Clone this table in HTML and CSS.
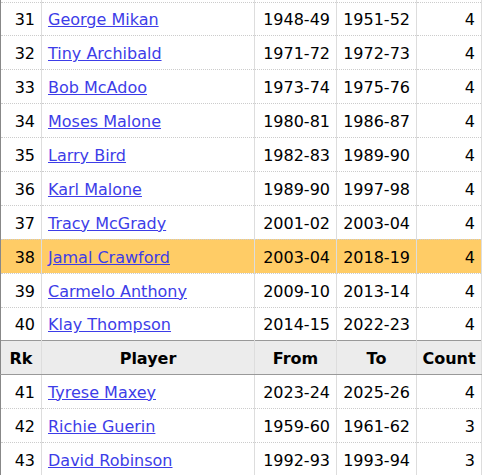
FILE: index.html
```html
<!DOCTYPE html>
<html>
<head>
<meta charset="utf-8">
<link rel="stylesheet" href="styles.css">
</head>
<body>
<table class="stats">
  <colgroup>
    <col class="c-rk"><col class="c-player"><col class="c-from"><col class="c-to"><col class="c-count">
  </colgroup>
  <tbody>
    <tr class="cut"><td></td><td></td><td></td><td></td><td></td></tr>
    <tr><td class="num">31</td><td class="name"><a href="#">George Mikan</a></td><td class="num">1948-49</td><td class="num">1951-52</td><td class="num">4</td></tr>
    <tr><td class="num">32</td><td class="name"><a href="#">Tiny Archibald</a></td><td class="num">1971-72</td><td class="num">1972-73</td><td class="num">4</td></tr>
    <tr><td class="num">33</td><td class="name"><a href="#">Bob McAdoo</a></td><td class="num">1973-74</td><td class="num">1975-76</td><td class="num">4</td></tr>
    <tr><td class="num">34</td><td class="name"><a href="#">Moses Malone</a></td><td class="num">1980-81</td><td class="num">1986-87</td><td class="num">4</td></tr>
    <tr><td class="num">35</td><td class="name"><a href="#">Larry Bird</a></td><td class="num">1982-83</td><td class="num">1989-90</td><td class="num">4</td></tr>
    <tr><td class="num">36</td><td class="name"><a href="#">Karl Malone</a></td><td class="num">1989-90</td><td class="num">1997-98</td><td class="num">4</td></tr>
    <tr><td class="num">37</td><td class="name"><a href="#">Tracy McGrady</a></td><td class="num">2001-02</td><td class="num">2003-04</td><td class="num">4</td></tr>
    <tr class="hl"><td class="num">38</td><td class="name"><a href="#">Jamal Crawford</a></td><td class="num">2003-04</td><td class="num">2018-19</td><td class="num">4</td></tr>
    <tr><td class="num">39</td><td class="name"><a href="#">Carmelo Anthony</a></td><td class="num">2009-10</td><td class="num">2013-14</td><td class="num">4</td></tr>
    <tr><td class="num">40</td><td class="name"><a href="#">Klay Thompson</a></td><td class="num">2014-15</td><td class="num">2022-23</td><td class="num">4</td></tr>
    <tr class="head"><th>Rk</th><th>Player</th><th>From</th><th>To</th><th>Count</th></tr>
    <tr class="after"><td class="num">41</td><td class="name"><a href="#">Tyrese Maxey</a></td><td class="num">2023-24</td><td class="num">2025-26</td><td class="num">4</td></tr>
    <tr><td class="num">42</td><td class="name"><a href="#">Richie Guerin</a></td><td class="num">1959-60</td><td class="num">1961-62</td><td class="num">3</td></tr>
    <tr><td class="num">43</td><td class="name"><a href="#">David Robinson</a></td><td class="num">1992-93</td><td class="num">1993-94</td><td class="num">3</td></tr>
  </tbody>
</table>
</body>
</html>
```
FILE: styles.css
```css
html, body {
  margin: 0;
  padding: 0;
  background: #fff;
}
body {
  font-family: "DejaVu Sans", Verdana, sans-serif;
  font-size: 16px;
  color: #000;
}
.stats {
  border-collapse: collapse;
  table-layout: fixed;
  width: 482px;
  border-left: 1px solid #888;
}
.c-rk { width: 41px; }
.c-player { width: 213px; }
.c-from { width: 82px; }
.c-to { width: 80px; }
.c-count { width: 65px; }
.stats td, .stats th {
  border-left: 1px solid #ddd;
  border-right: 1px solid #ddd;
  border-top: 1px dotted #ccc;
  height: 33.9px;
  padding: 2px 0 0 0;
  vertical-align: middle;
  white-space: nowrap;
  box-sizing: border-box;
}
.stats td:first-child, .stats th:first-child {
  border-left: 1px solid #888;
}
.stats tr.cut td {
  height: 2px;
  padding: 0;
  border-top: none;
  font-size: 0;
  line-height: 0;
}
.num {
  text-align: right;
  padding-right: 6px !important;
}
.name {
  text-align: left;
  padding-left: 6px !important;
}
.name a {
  color: #3d3de8;
  text-decoration: underline;
}
.hl td {
  background: #ffcc66;
}
.head th {
  background: #ececec;
  font-weight: bold;
  text-align: center;
  height: 33.5px;
  border-top: 1px solid #999;
  border-bottom: 1px solid #999;
}
.after td {
  border-top: 1px solid #999;
}
```
